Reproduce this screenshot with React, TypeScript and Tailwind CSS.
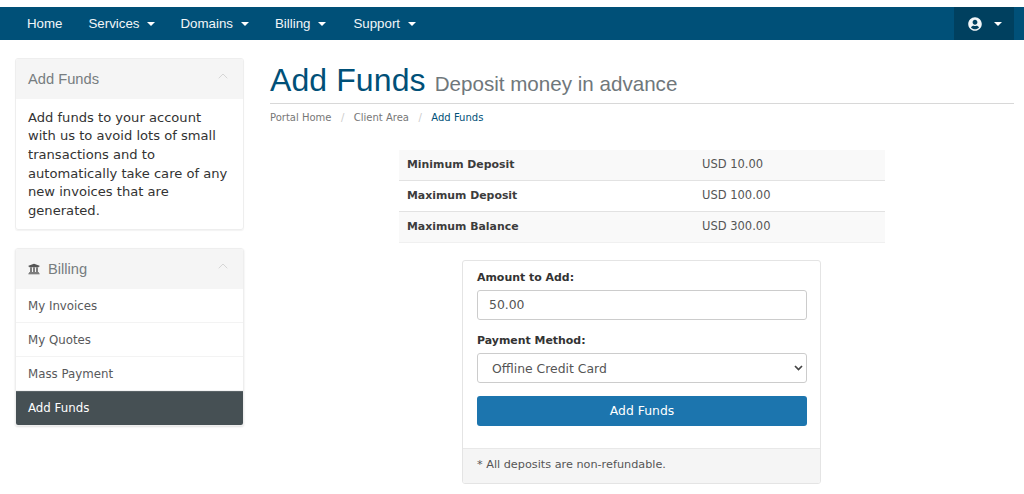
import { FaUniversity, FaUserCircle } from "react-icons/fa";
import { ChevronUp } from "lucide-react";

const sans = "font-['Liberation_Sans',Arial,sans-serif]";
const deja = "font-['DejaVu_Sans',Verdana,sans-serif]";

function Caret({ gap }: { gap: string }) {
  return <span className={`${gap} inline-block w-0 h-0 border-x-[4px] border-x-transparent border-t-[4px] border-t-white`} />;
}

function NavItem({ label, caret, className }: { label: string; caret?: boolean; className: string }) {
  return (
    <span className={`flex items-center pt-[1px] text-[13.3px] text-[#f2f6f8] ${className}`}>
      {label}
      {caret && <Caret gap="ml-[8px]" />}
    </span>
  );
}

function PanelHead({ title, icon }: { title: string; icon?: boolean }) {
  return (
    <div className={`h-[40px] bg-[#f5f5f5] flex items-center justify-between pl-[12px] pr-[12px] ${sans}`}>
      <span className="flex items-center text-[14.7px] text-[#777d80]">
        {icon && <FaUniversity className="mr-[8px] text-[12px] text-[#555]" />}
        {title}
      </span>
      <ChevronUp size={16} strokeWidth={1.5} className="text-[#d6d6d6] mb-[7px]" />
    </div>
  );
}

function SideLink({ label, active }: { label: string; active?: boolean }) {
  return (
    <div
      className={`h-[34px] flex items-center pl-[12px] text-[11.8px] ${
        active ? "bg-[#465054] text-white border-t border-[#5b6468]" : "bg-white text-[#58595b] border-b border-[#f3f3f3] pt-[2px]"
      }`}
    >
      {label}
    </div>
  );
}

function Row({ label, value, striped, line }: { label: string; value: string; striped?: boolean; line?: boolean }) {
  return (
    <div className={`${line ? "h-[31px] border-t border-[#e2e2e2]" : "h-[30px]"} flex items-center pl-[8px] text-[11.5px] ${striped ? "bg-[#f9f9f9]" : "bg-white"}`}>
      <span className="w-[295px] text-[10.9px] font-bold text-[#3c3c3c]">{label}</span>
      <span className="text-[#555]">{value}</span>
    </div>
  );
}

export default function App() {
  return (
    <div className={`w-[1024px] h-[494px] overflow-hidden bg-white pt-[7px] ${deja}`}>
      <nav className={`h-[33px] bg-[#005078] flex items-center pl-[27px] pr-[10px] ${sans}`}>
        <NavItem label="Home" className="mr-[26px]" />
        <NavItem label="Services" caret className="mr-[25px]" />
        <NavItem label="Domains" caret className="mr-[26px]" />
        <NavItem label="Billing" caret className="mr-[27px]" />
        <NavItem label="Support" caret className="" />
        <div className="ml-auto w-[60px] h-full bg-[#00405f] flex items-center pl-[14px]">
          <FaUserCircle className="text-[14px] text-[#f2f6f8]" />
          <Caret gap="ml-[12px]" />
        </div>
      </nav>

      <div className="flex pl-[15px] pr-[10px] pt-[18px]">
        <aside className="w-[229px] shrink-0 mr-[26px]">
          <section className="rounded-[3px] border border-[#eeeeee] shadow-[0_1px_1px_rgba(0,0,0,0.05)] overflow-hidden">
            <PanelHead title="Add Funds" />
            <p className="px-[12px] pt-[9.6px] pb-[8.4px] text-[13.1px] leading-[18.7px] text-[#333]">
              Add funds to your account with us to avoid lots of small transactions and to automatically take care of any new invoices that are generated.
            </p>
          </section>
          <section className="mt-[18px] rounded-[3px] border border-[#eeeeee] shadow-[0_1px_2px_rgba(0,0,0,0.12)] overflow-hidden">
            <PanelHead title="Billing" icon />
            <SideLink label="My Invoices" />
            <SideLink label="My Quotes" />
            <SideLink label="Mass Payment" />
            <SideLink label="Add Funds" active />
          </section>
        </aside>

        <main className="flex-1 min-w-0">
          <div className={`h-[46px] flex items-end border-b border-[#d8d8d8] ${sans}`}>
            <h1 className="text-[32px] leading-[36px] mb-[5px] text-[#005078] tracking-[0.1px]">Add Funds</h1>
            <span className="ml-[9px] mb-[6px] text-[20.6px] leading-[26px] text-[#6f777b]">Deposit money in advance</span>
          </div>
          <div className="h-[27px] flex items-center text-[10px] text-[#777]">
            <span>Portal Home</span>
            <span className="mx-[9.5px] text-[#ccc]">/</span>
            <span>Client Area</span>
            <span className="mx-[9.5px] text-[#ccc]">/</span>
            <span className="text-[#005078]">Add Funds</span>
          </div>

          <div className="w-[486px] ml-[129px] mt-[19px] border-b border-[#f0f0f0]">
            <Row label="Minimum Deposit" value="USD 10.00" striped />
            <Row label="Maximum Deposit" value="USD 100.00" line />
            <Row label="Maximum Balance" value="USD 300.00" striped line />
          </div>

          <div className="w-[359px] ml-[192px] mt-[17px] rounded-[3px] border border-[#e4e4e4] overflow-hidden">
            <div className="pl-[14px] pr-[13px] pt-[9px] pb-[22px]">
              <label className="block text-[10.95px] font-bold leading-[16px] text-[#333] mb-[4px]">Amount to Add:</label>
              <div className="h-[30px] flex items-center rounded-[3px] border border-[#cccccc] pl-[11px] text-[12.4px] text-[#555]">50.00</div>
              <label className="block mt-[13px] text-[10.95px] font-bold leading-[16px] text-[#333] mb-[4px]">Payment Method:</label>
              <div className="h-[30px] flex items-center justify-between rounded-[3px] border border-[#cccccc] pl-[14px] pr-[3px] text-[12.4px] text-[#555]">
                <span className="pt-[2px]">Offline Credit Card</span>
                <svg width="9" height="6" viewBox="0 0 9 6" fill="none" stroke="#444" strokeWidth="1.7"><path d="M1 1l3.5 3.5L8 1" /></svg>
              </div>
              <div className="mt-[13px] h-[30px] rounded-[3px] bg-[#1c75ae] flex items-center justify-center text-[12.4px] text-white">Add Funds</div>
            </div>
            <div className="h-[35px] bg-[#f5f5f5] border-t border-[#e8e8e8] flex items-center pb-[1px] px-[14px] text-[11.25px] text-[#555]">* All deposits are non-refundable.</div>
          </div>
        </main>
      </div>
    </div>
  );
}
